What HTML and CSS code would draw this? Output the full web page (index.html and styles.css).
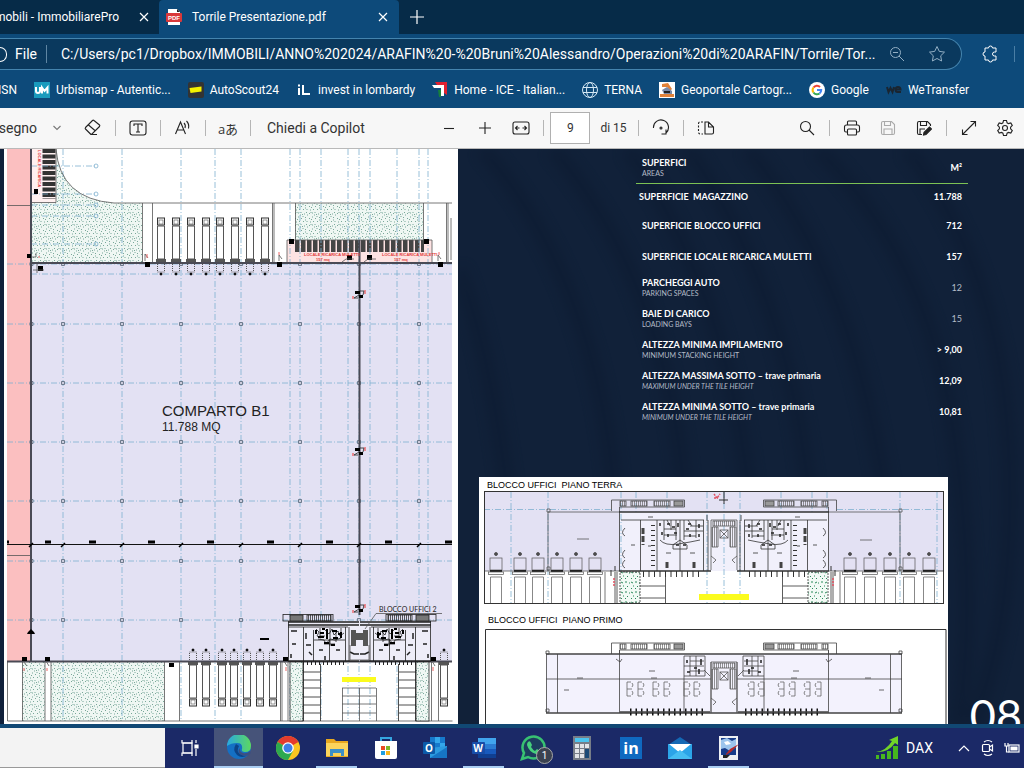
FILE: index.html
```html
<!DOCTYPE html>
<html lang="it">
<head>
  <meta charset="UTF-8">
  <meta name="viewport" content="width=device-width, initial-scale=1.0">
  <title>Torrile Presentazione.pdf</title>
  <link rel="stylesheet" href="styles.css">
</head>
<body>

  <!-- Tabs -->
  <div class="tabs">
    <div class="tab tab-cut">
      <span>Immobili - ImmobiliarePro</span>
      <button class="close" aria-label="Chiudi"><svg width="10" height="10" viewBox="0 0 10 10"><path d="M1 1l8 8M9 1l-8 8"/></svg></button>
    </div>
    <div class="tab active">
      <svg width="16" height="16" viewBox="0 0 16 16"><path d="M2 0h9l3 3v13H2z" fill="#fff"/><path d="M11 0v3h3z" fill="#222"/><rect y="4" width="16" height="9" rx="1" fill="#d9383a"/><text x="8" y="11" class="pdf-mark">PDF</text></svg>
      <span>Torrile Presentazione.pdf</span>
      <button class="close" aria-label="Chiudi"><svg width="10" height="10" viewBox="0 0 10 10"><path d="M1 1l8 8M9 1l-8 8"/></svg></button>
    </div>
    <button class="new-tab" aria-label="Nuova scheda"><svg width="14" height="14" viewBox="0 0 14 14"><path d="M7 0v14M0 7h14"/></svg></button>
  </div>

  <!-- Address bar -->
  <div class="address">
    <div class="omnibox">
      <span class="info"></span>
      <label for="url">File</label>
      <input id="url" type="text" value="C:/Users/pc1/Dropbox/IMMOBILI/ANNO%202024/ARAFIN%20-%20Bruni%20Alessandro/Operazioni%20di%20ARAFIN/Torrile/Tor...">
      <button aria-label="Zoom"><svg width="16" height="16" viewBox="0 0 16 16"><circle cx="6.500" cy="6.500" r="5"/><path d="M10 10l5 5M4 6.500h5"/></svg></button>
      <button aria-label="Preferiti"><svg width="18" height="18" viewBox="0 0 18 18"><path d="M9 1.500l2.300 4.900 5.200.7-3.800 3.700.9 5.200L9 13.500 4.400 16l.9-5.200L1.500 7.100l5.200-.7z"/></svg></button>
    </div>
    <button class="ext" aria-label="Estensioni"><svg width="18" height="18" viewBox="0 0 18 18"><path d="M4 3h3.500a2 2 0 0 1 4 0H15v4h-1.500a2 2 0 0 0 0 4H15v4h-3.500a2 2 0 0 1-4 0H4v-4a2 2 0 0 1 0-4z"/></svg></button>
    <span class="edge-line"></span>
  </div>

  <!-- Favourites -->
  <nav class="favourites">
    <a href="#" class="fav-cut">MSN</a>
    <a href="#"><svg width="16" height="16" viewBox="0 0 16 16"><rect width="16" height="16" fill="#1a9bbd"/><path d="M2 5v4q0 2 2 2t2-2V5M8 11.500V5.500l2.500 3.500L13.500 5.500v6" fill="none" stroke="#fff" stroke-width="2"/></svg>Urbismap - Autentic...</a>
    <a href="#"><svg width="16" height="16" viewBox="0 0 16 16"><rect width="16" height="16" rx="2" fill="#333"/><path d="M1.500 6l12-1.500v5L2.500 11z" fill="#f5f200"/></svg>AutoScout24</a>
    <a href="#"><svg width="16" height="16" viewBox="0 0 16 16"><path d="M3 6v7M3 2.500v2M7 3v9h7" fill="none" stroke="#fff" stroke-width="2"/></svg>invest in lombardy</a>
    <a href="#"><svg width="16" height="16" viewBox="0 0 16 16"><path d="M3 0h12v13l-3-2V3H5z" fill="#e02030"/><path d="M0 3h12v11H9V6H2z" fill="#fff"/><path d="M6 8h3v7H7z" fill="#16803c"/></svg>Home - ICE - Italian...</a>
    <a href="#"><svg width="16" height="16" viewBox="0 0 16 16" fill="none" stroke="#d4e8f5"><circle cx="8" cy="8" r="7.500"/><ellipse cx="8" cy="8" rx="3.500" ry="7.500"/><path d="M1 5.500h14M1 10.500h14"/></svg>TERNA</a>
    <a href="#"><svg width="16" height="16" viewBox="0 0 16 16"><rect width="16" height="16" fill="#fff"/><path d="M3 2l6-1 4 6-2 2-3-4H3z" fill="#e0823a"/><path d="M3 8l5-3 5 4v3H5z" fill="#7a8aa8"/><path d="M1 12h14v3H1z" fill="#e0823a"/><path d="M5 10h6" stroke="#222" stroke-width="2"/></svg>Geoportale Cartogr...</a>
    <a href="#"><svg width="16" height="16" viewBox="0 0 16 16" fill="none" stroke-width="2"><circle cx="8" cy="8" r="8" fill="#fff"/><path d="M4.500 5.500A4.200 4.200 0 0 1 11 5" stroke="#ea4335"/><path d="M4.500 5.500a4.200 4.200 0 0 0 0 5" stroke="#fbbc05"/><path d="M4.500 10.500A4.200 4.200 0 0 0 10.500 11.500" stroke="#34a853"/><path d="M10.500 11.500A4.200 4.200 0 0 0 12.200 8H8" stroke="#4285f4"/></svg>Google</a>
    <a href="#"><svg width="16" height="16" viewBox="0 0 16 16"><path d="M1 5l1.500 5L4.500 6l2 4L8 5M15 10h-3.500q-2 0-2-2.500T12 5t2.500 2.500H10" fill="none" stroke="#1a2530" stroke-width="2"/></svg>WeTransfer</a>
  </nav>

  <!-- PDF toolbar -->
  <div class="pdf-bar">
    <div class="group">
      <span class="draw">Disegno</span>
      <button class="arrow" aria-label="Opzioni disegno"><svg width="8" height="6" viewBox="0 0 8 6"><path d="M.5 1L4 4.500 7.500 1"/></svg></button>
      <button aria-label="Cancella"><svg width="18" height="18" viewBox="0 0 18 18"><path d="M7 15.500L1.500 10q-.7-.7 0-1.500l7-7q.7-.7 1.500 0L15.500 6q.7.7 0 1.500l-8 8zM4.500 6l7 6M7 15.500h6"/></svg></button>
      <i class="sep"></i>
      <button aria-label="Testo"><svg width="18" height="16" viewBox="0 0 18 16"><rect x="1" y="1" width="16" height="14" rx="2.500"/><path d="M5 6V4h8v2M9 4v8M7 12h4"/></svg></button>
      <i class="sep"></i>
      <button aria-label="Leggi"><svg width="18" height="18" viewBox="0 0 18 18"><path d="M1.500 15L6.500 3l5 12M3 11h7M10 4q2 2 1 5M12.500 2q3 3 2 7.500"/></svg></button>
      <i class="sep"></i>
      <button class="translate" aria-label="Traduci">aあ</button>
      <i class="sep"></i>
      <button class="copilot">Chiedi a Copilot</button>
    </div>
    <div class="group">
      <button aria-label="Riduci"><svg width="12" height="12" viewBox="0 0 12 12"><path d="M1 6.500h10"/></svg></button>
      <button aria-label="Ingrandisci"><svg width="12" height="12" viewBox="0 0 12 12"><path d="M0 6h12M6 0v12"/></svg></button>
      <button aria-label="Adatta"><svg width="18" height="14" viewBox="0 0 18 14"><rect x="1" y="1" width="16" height="12" rx="2"/><path d="M3.500 7h4M5.500 5l-2 2 2 2M14.500 7h-4M12.500 5l2 2-2 2"/></svg></button>
      <i class="sep"></i>
      <input id="page" class="page" type="text" value="9">
      <label for="page" class="of">di 15</label>
      <i class="sep"></i>
      <button aria-label="Ruota"><svg width="18" height="18" viewBox="0 0 18 18"><path d="M1.500 9A7.500 7.500 0 1 1 14 14M14 10.500v4.500h-4.500"/><circle cx="9" cy="9" r="1"/></svg></button>
      <i class="sep"></i>
      <button aria-label="Visualizzazione"><svg width="18" height="16" viewBox="0 0 18 16"><path d="M8 2v12h7q1.500 0 1.500-1.500V7L11.500 2zM11.500 2v5h5"/><path d="M6 2H3Q1.500 2 1.500 4v8q0 2 1.500 2h3" stroke-dasharray="2 1.500"/></svg></button>
    </div>
    <div class="group">
      <button aria-label="Cerca"><svg width="16" height="16" viewBox="0 0 16 16"><circle cx="6.500" cy="6.500" r="5"/><path d="M10 10l5 5"/></svg></button>
      <i class="sep"></i>
      <button aria-label="Stampa"><svg width="18" height="16" viewBox="0 0 18 16"><path d="M4.500 5V2q0-1 1-1h7q1 0 1 1v3M4.500 12H3q-1.500 0-1.500-1.500V7q0-2 2-2h11q2 0 2 2v3.500q0 1.500-1.500 1.500h-1.500"/><rect x="4.500" y="9" width="9" height="6" rx="1"/></svg></button>
      <button class="off" aria-label="Salva"><svg width="16" height="16" viewBox="0 0 16 16"><path d="M3 1.500h8.500l3 3V13q0 1.500-1.500 1.500H3q-1.500 0-1.500-1.500V3q0-1.500 1.500-1.500zM4.500 2v3.500h6V2M4 14V9h8v5"/></svg></button>
      <button aria-label="Salva con nome"><svg width="16" height="16" viewBox="0 0 16 16"><path d="M6 14.500H3q-1.500 0-1.500-1.500V3q0-1.500 1.500-1.500h8.500l3 3V6M4.500 2v3.500h6V2M4 14V9h5"/><path d="M8 12.500l5.500-5.500 2 2-5.500 5.500-2.500.5z" fill="#222"/></svg></button>
      <i class="sep"></i>
      <button aria-label="Schermo intero"><svg width="16" height="16" viewBox="0 0 16 16"><path d="M1.500 14.500l13-13M9.500 1.500h5v5M1.500 9.500v5h5"/></svg></button>
      <button aria-label="Impostazioni"><svg width="18" height="18" viewBox="0 0 18 18"><circle cx="9" cy="9" r="2.500"/><path d="M7.500 1.500h3l.6 2.300 1.300.8 2.400-.7 1.500 2.600L14.600 8.200v1.600l1.700 1.700-1.500 2.600-2.400-.7-1.300.8-.6 2.300h-3l-.6-2.300-1.300-.8-2.400.7-1.500-2.600 1.700-1.700V8.200L1.700 6.500l1.500-2.600 2.400.7 1.300-.8z"/></svg></button>
    </div>
  </div>

  <!-- Document -->
  <main class="doc">
    <section class="sheet">
      <svg class="plan" viewBox="4 149 454 575">
        <defs>
          <pattern id="grass" width="14" height="12" patternUnits="userSpaceOnUse">
            <rect width="14" height="12" fill="#eff7f3"/>
            <path d="M1 2l1 1M4 1h1M7 3l1-1M11 1l1 1M2 6h1M5 5l1 1M9 6l1-1M13 5v1M1 10l1-1M4 9h1M7 8v1M10 10h1M12 8l1 1M6 11h1M3 4l1-1M9 0v1M11 4h1M3 8v1M8 10l1 1M13 11h1" stroke="#5a9481" stroke-width=".8"/>
          </pattern>
          <pattern id="bars" width="6" height="12" x="295" y="240" patternUnits="userSpaceOnUse"><rect x="0" y="0" width="4.500" height="12" fill="#444"/></pattern>
          <pattern id="steps" width="2" height="8" patternUnits="userSpaceOnUse"><path d="M.5 0v8" stroke="#333" stroke-width=".8"/></pattern>
          <g id="truck" fill="none" stroke="#555">
            <rect x="-3.500" y="218" width="7" height="7" stroke="#333"/><rect x="-2" y="220" width="4" height="4" stroke-width=".6"/>
            <path d="M-3.500 226v33h7v-33z"/><path d="M-5 260.500H5" stroke-width="3"/>
            <path d="M-3.500 264v8h7v-8" stroke-dasharray="1 1"/><circle cy="274" r="1" fill="#000" stroke="#000"/>
          </g>
          <g id="pillars" fill="#ccd" stroke="#567" stroke-width=".8">
            <path d="M30-1.500h3v3h-3zM61.500-1.500h3v3h-3zM120.500-1.500h3v3h-3zM179.500-1.500h3v3h-3zM239.500-1.500h3v3h-3zM298.500-1.500h3v3h-3zM357.500-1.500h3v3h-3zM417.500-1.500h3v3h-3z"/>
          </g>
          <g id="door"><path d="M-4-3h5v3h-5zM0 1h4v3H0z"/><path d="M1-3h4l-1 4M0 1l-5 3h4" fill="none" stroke="#222" stroke-width=".8"/><path d="M6-4v4M-6 2v3" stroke="#e33"/></g>
          <g id="offices" fill="none" stroke="#222" stroke-width=".8">
            <rect x="283" y="614.500" width="50" height="6.500"/><rect x="290" y="615" width="13" height="6" fill="#777"/><rect x="307" y="615" width="24" height="6" fill="url(#steps)"/>
            <path d="M288 622h71M288 625h71M288 661h71" stroke-width="1.500"/>
            <path d="M288.500 621v40M303.500 627v34M313.500 630v31M329.500 640v21M345.500 627v34M349 627v34M288 627h60M314 640h31"/>
            <path d="M316 629l3 3-2 4 4 2M320 628v8h5M325 630l4 4 3-5 2 6 4-4 2 5 4-3M318 639l6 1 2 4 4-5 5 1 6-2M330 628v18M324 644h11M336 630v12M341 628v10"/>
            <path d="M316 630v4M320 633h4M327 629v10M332 631h5M341 632v6M318 637h6M333 638h5M324 643h5M331 645h4M338 634h4M322 629h3" stroke="#000" stroke-width="2"/>
            <path d="M291 631h6M292 644h4M306 645h5M306 633v6M309 652l3 3M319 650h4M336 650h4M291 654v4M325 656v4M350 652l4 2h5" stroke-width="1.500"/>
            <path d="M295 663h52" stroke-width="4" stroke-dasharray="1 3"/>
            <path d="M303.500 662v59M320.500 664v57M303 672h17M303 680h17M303 688h17M303 697h17M303 705h17M303 713h17"/>
            <rect x="290" y="662" width="13" height="59" fill="url(#grass)"/>
          </g>
        </defs>

        <rect x="7" y="149" width="24" height="512" fill="#fbbfc0"/>
        <rect x="31" y="263" width="421" height="398" fill="#e3e1f3"/>
        <path d="M56 149q4 50 58 54h28v59H32v-59h24z" fill="url(#grass)"/>
        <path d="M295 203h128v37H295zM22 662h23v59H22zM51 662h113v59H51z" fill="url(#grass)"/>
        <path d="M287 240h145v22H287z" fill="#fde3e3"/>
        <path d="M32 149h24v54H32z" fill="#fff0f0"/>
        <rect x="295" y="240" width="129" height="12" fill="url(#bars)"/>
        <path d="M49 149v50" stroke="#333" stroke-width="13" stroke-dasharray="4 1.500"/>

        <!-- Grid axes -->
        <path class="axis" d="M63 149v572M122 149v572M181 149v572M215 149v572M241 149v572M290 149v572M300 149v572M321 149v572M348 149v572M359 149v572M370 149v572M397 149v572M419 149v572M428 149v572"/>
        <path class="axis" d="M7 264h445M31 274h421M7 324h445M7 383h445M7 442h445M7 501h445M7 561h445M7 620h445M31 166h66M31 194h66M31 205h66M31 216h66M31 244h66"/>
        <g class="ring"><circle cx="96" cy="166" r="2"/><circle cx="96" cy="194" r="2"/><circle cx="96" cy="205" r="2"/><circle cx="96" cy="216" r="2"/><circle cx="96" cy="244" r="2"/></g>
        <use href="#pillars" y="264"/><use href="#pillars" y="324"/><use href="#pillars" y="383"/><use href="#pillars" y="442"/><use href="#pillars" y="501"/><use href="#pillars" y="561"/><use href="#pillars" y="620"/>

        <!-- Walls and outlines -->
        <path class="thin" d="M56 149q4 50 58 54h338M142.500 203v59M152.500 203v59M272.500 203v59M274 203v59M295.500 203v37M423.500 203v37M446.500 203v59M448 203v59M7 205.500h24M32 202.500h24V149M7 555.500h24M287 262v-22h145v22M451 218v42"/>
        <path class="thin" d="M7.500 661v60h445M22.500 661v60M45 661v60M51 661v60M164.500 661v60M179.500 661v60M280.500 661v60M282 661v60M288 661v60M431.500 661v60M438.500 661v60"/>
        <path class="wall" d="M31 149v512M31 263h421M7 661.500h445M359.500 240v375"/>
        <path d="M7 544.500h445" stroke="#111"/>
        <path d="M29 547l4-4M61 547l4-4M120 547l4-4M179 547l4-4M239 547l4-4M298 547l4-4M357 547l4-4M417 547l4-4" stroke="#000" stroke-width="1.500"/>
        <path d="M7 540.500h2v3H7zM45 540.500h6v3h-6zM89 540.500h7v3h-7zM148 540.500h7v3h-7zM207 540.500h7v3h-7zM267 540.500h7v3h-7zM326 540.500h7v3h-7zM385 540.500h7v3h-7zM445 540.500h7v3h-7zM260 638h9v2h-9z"/>

        <use href="#truck" x="161"/><use href="#truck" x="176"/><use href="#truck" x="191"/><use href="#truck" x="206"/><use href="#truck" x="220"/><use href="#truck" x="235"/><use href="#truck" x="250"/><use href="#truck" x="265"/>
        <g transform="translate(0 924) scale(1 -1)">
          <use href="#truck" x="193"/><use href="#truck" x="206"/><use href="#truck" x="222"/><use href="#truck" x="234"/><use href="#truck" x="247"/><use href="#truck" x="260"/><use href="#truck" x="273"/><use href="#truck" x="444"/>
        </g>

        <use href="#door" x="359" y="294"/><use href="#door" x="359" y="451"/><use href="#door" x="359" y="608"/>
        <path d="M27 254h4v4h-4zM38 266h5v5h-5zM34 189h4v5h-4zM145 262h5v5h-5zM277 262h5v5h-5zM438 262h5v5h-5zM289 239h5v5h-5zM424 239h5v5h-5zM347 255h5v5h-5zM367 255h5v5h-5zM22 657h5v4h-5zM45 657h5v4h-5zM169 663h5v4h-5zM283 657h5v4h-5zM431 657h5v4h-5zM28 632l3-3 3 3 1 2h-8z"/>
        <path d="M32 257h4v-4M33 270h11M37 264v9M145 261v-7l3 4M279 261v-6l3 4M438 261v-6l3 4M342 262l4-3h8M364 262l4-3h8M23 661l4 5M46 661l3 5M284 661l3 5M432 661l3 5" class="thin"/>
        <path d="M147 254v4M279 252v3M439 252v3M24 668v3M47 668v3M286 667v4M433 667v4M38 257h2" stroke="#e66"/>

        <!-- Office block -->
        <rect x="288" y="621" width="143" height="40" fill="#eeedf8"/>
        <use href="#offices"/>
        <use href="#offices" transform="translate(719 0) scale(-1 1)"/>
        <path d="M351 630h5v3h7v-3h5v16h-5v-6h-7v6h-5z" fill="#555"/><path class="thin" d="M350 645v15h19v-15M342.500 688v33M359.500 688v33M376.500 688v33M342 688h34M342 696h34M342 704h34M342 713h34"/>
        <path d="M342 677h34v5h-34z" fill="#fbfb1e"/>
        <path class="thin" d="M365 629l11-15.500h66"/>

        <text x="162" y="416" font-size="15">COMPARTO B1</text>
        <text x="162" y="431" font-size="12">11.788 MQ</text>
        <text x="379" y="612" class="office-name">BLOCCO UFFICI 2</text>
        <g class="red-text">
          <text x="304" y="256">LOCALE RICARICA MULETTI</text><text x="316" y="261">157 mq</text>
          <text x="382" y="256">LOCALE RICARICA MULETTI</text><text x="394" y="261">157 mq</text>
          <text transform="translate(38 150) rotate(90)">LOCALE RICARICA</text>
        </g>
      </svg>
    </section>

    <section class="slide">
      <svg class="waves" viewBox="0 0 566 575" preserveAspectRatio="none" aria-hidden="true">
        <path d="M25 0q110 130 130 330T200 575"/><path d="M95 0q110 130 130 330T270 575"/><path d="M170 0q90 130 115 300T340 575"/><path d="M230 0q90 130 115 300T400 575"/><path d="M290 0q90 110 125 280T450 575"/><path d="M360 0q110 110 135 280T500 575"/><path d="M450 0q90 120 100 290T515 575"/><path d="M0 120q50 120 70 455"/>
      </svg>
      <table class="areas">
        <thead>
          <tr><th>SUPERFICI<small>AREAS</small></th><th>M²</th></tr>
        </thead>
        <tbody>
          <tr class="first"><th>SUPERFICIE&nbsp; MAGAZZINO</th><td>11.788</td></tr>
          <tr><th>SUPERFICIE BLOCCO UFFICI</th><td>712</td></tr>
          <tr><th>SUPERFICIE LOCALE RICARICA MULETTI</th><td>157</td></tr>
          <tr><th>PARCHEGGI AUTO<small>PARKING SPACES</small></th><td class="light">12</td></tr>
          <tr><th>BAIE DI CARICO<small>LOADING BAYS</small></th><td class="light">15</td></tr>
          <tr><th>ALTEZZA MINIMA IMPILAMENTO<small>MINIMUM STACKING HEIGHT</small></th><td>&gt; 9,00</td></tr>
          <tr><th>ALTEZZA MASSIMA SOTTO – trave primaria<small class="slant">MAXIMUM UNDER THE TILE HEIGHT</small></th><td>12,09</td></tr>
          <tr><th>ALTEZZA MINIMA SOTTO – trave primaria<small class="slant">MINIMUM UNDER THE TILE HEIGHT</small></th><td>10,81</td></tr>
        </tbody>
      </table>

      <svg class="floors" viewBox="479 477 469 247">
        <defs>
          <pattern id="treads" width="2" height="20" patternUnits="userSpaceOnUse"><path d="M.5 0v20" stroke="#666" stroke-width=".7"/></pattern>
          <pattern id="shrubs" width="10" height="10" patternUnits="userSpaceOnUse"><rect width="10" height="10" fill="#f2faf5"/><path d="M1 2l2 1M6 1v2M8 6l-1 1M3 6h1M1 9l1-1M5 9l1-1M9 3h1" stroke="#2b8a5c"/></pattern>
          <g id="bay" fill="none" stroke="#555" stroke-width=".7"><rect x="-6" y="558" width="12" height="12"/><path d="M-6 571H6" stroke="#222" stroke-width="2"/><rect x="-7.500" y="572" width="15" height="2.500"/><path d="M-5.500 603v-26h11v26"/><circle cy="554" r="1.500" fill="#555" stroke="#333"/></g>
          <g id="balcony" fill="none" stroke="#444" stroke-width=".8"><path d="M611.500 511v-11h73v7h-65v4"/><rect x="620" y="501" width="6" height="5" fill="url(#treads)"/><rect x="631" y="501" width="16" height="5" fill="url(#treads)"/><rect x="654" y="501" width="16" height="5" fill="url(#treads)"/><rect x="674" y="501" width="9" height="5" fill="#999"/></g>
          <g id="stairs" fill="none" stroke="#555" stroke-width=".8"><path d="M711 520v50M737 520v50M711 520h26"/><path d="M713 521h22v5h-22zM712 527h6v20h-6zM730 527h6v20h-6z" fill="url(#treads)"/><rect x="720" y="530" width="8" height="8"/><path d="M720 530l8 8M728 530l-8 8M711 556l5 4-3 3M737 556l-5 4 3 3"/></g>
          <g id="wing" fill="none" stroke="#333" stroke-width=".8">
            <path d="M619 512h105M619 571h92" stroke-width="1.500"/><path d="M619.500 511v60M621 520h83M640.500 520v51M657 520v51M680 540v31M703.500 520v51M708 520v51" />
            <path d="M664 520v20M671 520v10M676 520v20M684 520v20M690 526h13M664 529h12M684 531h19M696 520v18M660 540q5 6 18 4t22-4M664 535h13M684 536h12M680 520v20M667 520l3 6M688 520l4 6M673 545l7-5 7 5v4h-14z"/>
            <path d="M660 523v3M667 524h3M678 523v4M688 524h3M699 524v4M668 534v3M674 533h3M690 534v3M699 534v3M662 532v3M686 529h3M672 527h3M676 545h3M683 545h3" stroke="#222" stroke-width="1.500"/>
            <path d="M643 528v17M667 562v6M694 562v6" stroke="#444" stroke-width="3" stroke-dasharray="6 2"/>
            <path d="M653 525v42" stroke-width="4" stroke-dasharray="1 4"/><path d="M625 528q-5 5 0 8M625 550q-5 5 0 8M625 560q-5 5 0 8M631 545h4M648 546h3M666 553h5M690 553h5M648 517h5M707 515v6"/>
            <path d="M643 574h60" stroke-width="6" stroke-dasharray="1 4.500"/>
            <rect x="620" y="572" width="20" height="31" fill="url(#shrubs)" stroke-dasharray="2 1"/><path d="M665.500 572v31M640 586h25M640 598h25M617 572v31M615 572v31"/>
          </g>
          <g id="desk" fill="none" stroke="#666" stroke-width=".8"><path d="M2 682h-4v14h4M-2 689h5M3 683q2 2 0 4M3 691q2 2 0 4"/></g>
          <g id="upper" fill="none" stroke="#444" stroke-width=".8">
            <rect x="546" y="654" width="178" height="59" fill="#f3f2fd" stroke="none"/>
            <path d="M546 654h178M546 713h178" stroke-width="1.500"/><path d="M546.500 654v59M619.500 650v63M557.500 654v59M546 679h165M684 656v57M711 662v51M546 651h3v3h-3zM546 709h3v3h-3z"/>
            <path d="M684 656h21v20h-21M690 656v20M696 656v20M684 666h20M704 670l6 6M690 661h14M690 671h14"/><path d="M687 660v3M694 668h3M701 659v6M687 672h3M699 669v5" stroke="#222" stroke-width="1.500"/>
            <path d="M630 712h76" stroke="#111" stroke-width="7" stroke-dasharray="1.500 4"/><path d="M620 712h90" stroke-width="1.500"/><path d="M577 678h6M651 678h6M564 690h5M649 671h6M616 659l4 3 2-3"/>
            <use href="#desk" x="629"/><use href="#desk" x="640"/><use href="#desk" x="655"/><use href="#desk" x="666"/><use href="#desk" x="686"/><use href="#desk" x="696"/>
          </g>
        </defs>
        <rect x="479" y="477" width="469" height="247" fill="#fff"/>

        <!-- Ground floor -->
        <rect x="484" y="492" width="459" height="79" fill="#e3e1f3"/><rect x="619" y="512" width="210" height="59" fill="#f1f0fb"/>
        <path class="axis" d="M511 492v111M548 492v111M621 492v111M636 492v20M667 492v20M707 492v111M724 492v111M740 492v111M781 492v20M812 492v20M827 492v20M900 492v111M937 492v111M484 509.500h127M837 509.500h106"/>
        <path class="thin" d="M548 571v-59h71M829 512h71v59M484 571h135M829 571h114M547 509h3v3h-3zM899 509h3v3h-3zM547 567h3v3h-3zM899 567h3v3h-3zM577 539h12M860 540h12M605 572v31M840 572v31"/>
        <use href="#wing"/><use href="#wing" transform="translate(1448 0) scale(-1 1)"/>
        <use href="#balcony"/><use href="#balcony" transform="translate(1448 0) scale(-1 1)"/>
        <use href="#stairs"/>
        <use href="#bay" x="496"/><use href="#bay" x="520"/><use href="#bay" x="538"/><use href="#bay" x="557"/><use href="#bay" x="576"/><use href="#bay" x="595"/>
        <use href="#bay" x="850"/><use href="#bay" x="870"/><use href="#bay" x="890"/><use href="#bay" x="909"/><use href="#bay" x="929"/>
        <path d="M699 594h50v6h-50z" fill="#fbfb1e"/>
        <path d="M724 492v12M719 500h9M611 570v6M615 566v5M831 566v5M835 570v6" stroke="#333"/>
        <path d="M714 494l3 4 3-4M714 498h4M614 578v9M833 578v9" fill="none" stroke="#e05060" stroke-width="1.500" stroke-dasharray="2 1"/>
        <rect x="484.500" y="491.500" width="459" height="112" class="frame"/>

        <!-- First floor -->
        <use href="#upper"/><use href="#upper" transform="translate(1448 0) scale(-1 1)"/>
        <use href="#balcony" y="143"/><use href="#balcony" y="143" transform="translate(1448 0) scale(-1 1)"/>
        <use href="#stairs" y="142"/>
        <path d="M485.500 724v-94.500h460.500v94.500" class="frame"/>

        <text x="487" y="488">BLOCCO UFFICI&#160; PIANO TERRA</text>
        <text x="488" y="623">BLOCCO UFFICI&#160; PIANO PRIMO</text>
      </svg>
      <span class="number">08</span>
    </section>
  </main>

  <!-- Taskbar -->
  <footer class="taskbar">
    <input class="search" type="text" aria-label="Cerca">
    <div class="apps">
      <button aria-label="Visualizzazione attività"><svg width="18" height="18" viewBox="0 0 18 18" fill="none" stroke="#fff" stroke-width="1.200"><path d="M1 1v3h10V1M1 17v-3h10v3M15 1v3M15 10v7"/><rect x="2" y="4" width="9" height="10"/><path d="M14 6h3v3h-3z" fill="#fff"/></svg></button>
      <button class="current" aria-label="Edge"><svg width="24" height="24" viewBox="0 0 24 24"><defs><linearGradient id="edge" x1="0" y1="0" x2="1" y2="0"><stop offset="0" stop-color="#2aa8e0"/><stop offset="1" stop-color="#5cd860"/></linearGradient></defs><circle cx="12" cy="12" r="12" fill="#1470c4"/><path d="M0 11A12 12 0 0 1 24 11q0 6-6 6-4 0-3-3 1-6-5-6-6 0-10 3z" fill="url(#edge)"/><path d="M9 9q-4 6 1 11 5 4 11 0-4 2-8-1t-1-8z" fill="#0c4488"/><path d="M13 13q-1 4 3 5 4 1 7-2l1 2-2 2q-6 2-9-1t0-6z" fill="#3c4f82"/></svg></button>
      <button aria-label="Chrome"><svg width="24" height="24" viewBox="0 0 24 24"><circle cx="12" cy="12" r="12" fill="#f8c520"/><path d="M12 12L1.600 6A12 12 0 0 1 22.400 6z" fill="#e33b2e"/><path d="M12 12L1.600 6A12 12 0 0 0 12 24l5-9z" fill="#2da94f"/><circle cx="12" cy="12" r="5.800" fill="#fff"/><circle cx="12" cy="12" r="4.500" fill="#3d7fe8"/></svg></button>
      <button class="open" aria-label="Esplora file"><svg width="22" height="20" viewBox="0 0 22 20"><path d="M0 1h8l2 2h12v16H0z" fill="#e8a820"/><path d="M0 5h22v13H0z" fill="#fbd45c"/><path d="M4 18v-7h14v7h-3v-3H7v3z" fill="#3b8fc8"/></svg></button>
      <button aria-label="Store"><svg width="24" height="24" viewBox="0 0 24 24"><path d="M7 6V2h10v4" fill="none" stroke="#35a5e0" stroke-width="2"/><path d="M1 5h22v16q0 2-2 2H3q-2 0-2-2z" fill="#fff"/><path d="M7 10h4v4H7z" fill="#e84a26"/><path d="M12 10h4v4h-4z" fill="#7cb72a"/><path d="M7 15h4v4H7z" fill="#209fe0"/><path d="M12 15h4v4h-4z" fill="#f8b61c"/></svg></button>
      <button aria-label="Outlook"><svg width="24" height="22" viewBox="0 0 24 22"><path d="M7 0h15v12H7z" fill="#1679cc"/><path d="M12 0h5v6h-5zM17 6h5v6h-5z" fill="#34a7ea"/><path d="M7 11l17-2v12H7z" fill="#2c9be0"/><path d="M7 21l17-11v11z" fill="#1675c5"/><rect y="5" width="12" height="12" rx="1" fill="#0c5aa8"/><text x="6" y="15" class="app-letter">O</text></svg></button>
      <button class="open" aria-label="Word"><svg width="24" height="20" viewBox="0 0 24 20"><path d="M6 0h18v6H6z" fill="#41a5ee"/><path d="M6 6h18v5H6z" fill="#2b7cd3"/><path d="M6 11h18v5H6z" fill="#185abd"/><path d="M6 16h18v4H6z" fill="#103f91"/><rect y="4" width="13" height="12" rx="1" fill="#174da8"/><text x="6" y="14" class="app-letter">W</text></svg></button>
      <button aria-label="WhatsApp"><svg width="26" height="26" viewBox="0 0 26 26"><path d="M2 24l2-6A11 11 0 1 1 8 22z" fill="#1d3d5e" stroke="#38c172" stroke-width="2.500"/><path d="M8 7q2-2 3 1l1 2-1 2q2 3 4 4l2-2 3 2q0 3-4 3Q9 17 7 10q0-2 1-3z" fill="#46d07c"/></svg><span class="badge">1</span></button>
      <button aria-label="Calcolatrice"><svg width="18" height="24" viewBox="0 0 18 24"><rect width="18" height="24" fill="#777d88"/><path d="M2 2h14v4H2z" fill="#4cc4ee"/><path d="M2 8h4v4H2zM7 8h4v4H7zM12 8h4v4h-4zM2 13h4v4H2zM7 13h4v4H7zM2 18h4v4H2zM7 18h4v4H7z" fill="#e2e4e8"/><path d="M12 13h4v9h-4z" fill="#1b4976"/></svg></button>
      <button aria-label="LinkedIn"><svg width="22" height="22" viewBox="0 0 22 22"><rect width="22" height="22" fill="#0f69c0"/><text x="11" y="17" class="linked">in</text></svg></button>
      <button aria-label="Posta"><svg width="24" height="22" viewBox="0 0 24 22"><path d="M0 8l12-8 12 8z" fill="#1468b4"/><path d="M0 7h24v15H0z" fill="#2ba4e8"/><path d="M1 7h22l-11 9z" fill="#fff"/><path d="M0 22l12-9 12 9z" fill="#45bdf2"/></svg></button>
      <button class="open" aria-label="Foto"><svg width="20" height="24" viewBox="0 0 20 24"><rect width="19" height="24" fill="#eef0f4"/><rect x="2" y="2" width="15" height="17" fill="#173c8a"/><path d="M2 4l6-2 5 3 4-2v8l-6 4-5-3-4 1z" fill="#9cc4ec"/><path d="M5 6l4-1 3 3-5 1z" fill="#fff"/><path d="M7 18l4-5 9-5-8 8-5 3z" fill="#b52a2a"/><path d="M4 19h7l-3 3H4z" fill="#222"/></svg></button>
    </div>
    <div class="tray">
      <button class="stock"><svg width="24" height="24" viewBox="0 0 24 24"><path d="M1 21v-2h3v4H1zM6 18h4v5H6zM12 15h4v8h-4zM18 10h5v13h-5z" fill="#46b81e"/><path d="M1 16q10-1 16-11l-3-1 9-4v9l-3-2Q13 17 1 16z" fill="#70d428"/></svg>DAX</button>
      <button aria-label="Icone nascoste"><svg width="12" height="8" viewBox="0 0 12 8"><path d="M1 7l5-5 5 5"/></svg></button>
      <button aria-label="Riunione"><svg width="14" height="18" viewBox="0 0 14 18"><rect x="1.500" y="5.500" width="7" height="7" rx="1"/><path d="M8.500 8l3-2v6l-3-2M3 3q4-3 8 0M3 15q4 3 8 0"/></svg></button>
      <button aria-label="Batteria"><svg width="16" height="12" viewBox="0 0 16 12"><rect x="5" y="3" width="10" height="7"/><path d="M7 5h6v3H7z" fill="#fff"/><path d="M1 1v3h3V1M2.500 4v6H5"/></svg></button>
    </div>
  </footer>

</body>
</html>
```
FILE: styles.css
```css
/* ====== RESET ====== */
* {
  box-sizing: border-box;
}

html, body {
  margin: 0;
  padding: 0;
}

body {
  display: flex;
  flex-direction: column;
  height: 100vh;
  overflow: hidden;
  background: #0d4a7a;
  color: #fff;
  font-family: "Segoe UI", Roboto, sans-serif;
  font-size: 12px;
}

button {
  display: flex;
  align-items: center;
  justify-content: center;
  margin: 0;
  padding: 0;
  border: 0;
  background: none;
  color: inherit;
  font: inherit;
}

input {
  border: 0;
  font: inherit;
  color: inherit;
}

svg {
  flex: none;
}

/* ====== TABS ====== */
.tabs {
  display: flex;
  flex: none;
  height: 34px;
  background: #062b48;
}

.tab {
  display: flex;
  align-items: center;
  width: 240px;
  padding: 0 11px 0 7px;
  white-space: nowrap;
}

.tab span {
  margin-left: 10px;
}

.tab-cut {
  width: 159px;
  padding: 0 10px 0 0;
  justify-content: flex-end;
  overflow: hidden;
}

.tab-cut .close {
  margin-left: 20px;
}

.tab.active {
  background: #0d4a7a;
  border-radius: 4px 4px 0 0;
}

.active .close {
  margin-left: auto;
}

.close svg, .new-tab svg {
  stroke: #fff;
  stroke-width: 1.2;
}

.new-tab {
  width: 36px;
}

.pdf-mark {
  fill: #fff;
  font: bold 6px "Liberation Sans", sans-serif;
  text-anchor: middle;
}

/* ====== ADDRESS ====== */
.address {
  display: flex;
  flex: none;
  align-items: center;
  height: 40px;
}

.omnibox {
  display: flex;
  flex: 1;
  align-items: center;
  height: 32px;
  border: 1px solid #4484ae;
  border-left: 0;
  border-radius: 0 16px 16px 0;
  background: #0a395e;
  font-size: 14px;
}

.info {
  width: 7px;
  height: 15px;
  border: 1px solid #fff;
  border-left: 0;
  border-radius: 0 8px 8px 0;
}

.omnibox label {
  width: 31px;
  margin-left: 8px;
}

.omnibox input {
  flex: 1;
  min-width: 0;
  height: 18px;
  padding: 0 0 0 14px;
  border-left: 1px solid #5f86a3;
  background: none;
}

.omnibox button {
  width: 40px;
}

.omnibox button svg {
  fill: none;
  stroke: #93afc4;
}

.omnibox button:last-child {
  margin-right: 4px;
}

.ext {
  width: 56px;
}

.ext svg {
  fill: none;
  stroke: #fff;
}

.edge-line {
  width: 6px;
  height: 16px;
  border-right: 1px solid #4a7ea5;
  margin: 0 9px 0 -9px;
}

/* ====== FAVOURITES ====== */
.favourites {
  display: flex;
  flex: none;
  gap: 17px;
  height: 34px;
  padding-bottom: 2px;
  white-space: nowrap;
  overflow: hidden;
}

.favourites a {
  display: flex;
  align-items: center;
  gap: 6px;
  color: #fff;
  text-decoration: none;
}

.favourites .fav-cut {
  width: 17px;
  justify-content: flex-end;
  overflow: hidden;
}

/* ====== PDF TOOLBAR ====== */
.pdf-bar {
  display: flex;
  flex: none;
  justify-content: space-between;
  height: 41px;
  padding-right: 1px;
  border-bottom: 1px solid #b9b9b9;
  background: #f7f7f7;
  color: #333;
  font-size: 14px;
}

.group {
  display: flex;
  align-items: center;
}

.group button {
  width: 36px;
  height: 32px;
}

.group svg {
  fill: none;
  stroke: #222;
  stroke-width: 1.1;
}

.group .off svg {
  stroke: #aaa;
}

.group .arrow svg {
  stroke: #777;
}

.group .copilot {
  width: auto;
  padding: 0 2px 0 12px;
}

.group .translate {
  font-family: "Open Sans", "Noto Sans CJK JP", sans-serif;
  font-size: 13px;
}

.draw {
  display: flex;
  justify-content: flex-end;
  width: 39px;
  padding-right: 2px;
  overflow: hidden;
}

.sep {
  width: 1px;
  height: 16px;
  margin: 0 4px;
  background: #b5b5b5;
}

.page {
  width: 40px;
  height: 32px;
  margin-left: 2px;
  border: 1px solid #b0b0b0;
  background: #fff;
  font-size: 12px;
  text-align: center;
}

.of {
  width: 44px;
  padding-left: 10px;
  font-size: 12px;
}

/* ====== DOCUMENT ====== */
.doc {
  display: grid;
  grid-template-columns: 458fr 566fr;
  flex: 1;
  min-height: 0;
  overflow: hidden;
  background: #10203a;
}

.sheet {
  padding-left: 4px;
}

.plan {
  display: block;
  width: 100%;
  background: #fff;
  font-family: "Liberation Sans", Arial, sans-serif;
}

.plan text {
  fill: #222;
}

.axis {
  fill: none;
  stroke: #7fb0cf;
  stroke-width: 0.8;
  stroke-dasharray: 6 2 1 2;
}

.thin, .ring {
  fill: none;
  stroke: #555;
  stroke-width: 0.8;
}

.ring {
  stroke: #7fb0cf;
}

.wall {
  fill: none;
  stroke: #4a4a55;
  stroke-width: 2;
}

.plan .office-name {
  font: 7px Lato, sans-serif;
}

.plan .red-text text {
  fill: #e23a3a;
  font-size: 4px;
  font-weight: bold;
}

.slide {
  position: relative;
  min-height: 0;
  padding: 5px 0 0;
  background: #112139;
  overflow: hidden;
  font-family: "Century Gothic", Lato, sans-serif;
}

.waves {
  position: absolute;
  inset: 0;
  width: 100%;
  height: 100%;
  fill: none;
  stroke: #0b182d;
  stroke-width: 16;
  opacity: 0.4;
  filter: blur(6px);
}

.areas {
  position: relative;
  width: calc(100% - 234px);
  margin: 0 56px 0 178px;
  border-collapse: collapse;
  font-size: 9px;
  line-height: 10px;
}

.areas tr {
  height: 31px;
}

.areas thead tr {
  height: 29px;
}

.areas .first {
  height: 27px;
}

.areas thead th {
  border-bottom: 1px solid #7cc254;
}

.areas th, .areas td {
  padding: 0 6px;
  text-align: left;
  font-weight: bold;
}

.areas .first th {
  padding-left: 3px;
}

.areas th:last-child, .areas td {
  text-align: right;
}

.areas small {
  display: block;
  color: #b4bcc8;
  font-size: 7px;
  font-weight: normal;
}

.areas .slant {
  font-style: italic;
}

.areas .light {
  color: #b4bcc8;
  font-weight: normal;
}

.floors {
  position: relative;
  display: block;
  width: calc(100% - 97px);
  margin: 50px 76px 0 21px;
  font: 9px "Liberation Sans", Arial, sans-serif;
}

.frame {
  fill: none;
  stroke: #333;
}

.number {
  position: absolute;
  right: 2px;
  bottom: -18px;
  font-size: 45px;
  line-height: 54px;
}

/* ====== TASKBAR ====== */
.taskbar {
  display: flex;
  flex: none;
  height: 44px;
  border-top: 4px solid #114874;
  background: #1b2967;
}

.search {
  width: 165px;
  border-bottom: 1px solid #999;
  background: #f3f3f3;
}

.apps {
  display: flex;
  flex: 1;
}

.apps button {
  position: relative;
  width: 49px;
}

.apps .current {
  background: #465379;
  border-bottom: 2px solid #a9cdf2;
}

.apps .open::after {
  content: "";
  position: absolute;
  left: 4px;
  right: 4px;
  bottom: 0;
  height: 2px;
  background: #a9cdf2;
}

.badge {
  position: absolute;
  right: 4px;
  bottom: 4px;
  width: 17px;
  height: 17px;
  border: 1px solid #aaa;
  border-radius: 50%;
  background: #3b4250;
  font-size: 10px;
  line-height: 15px;
}

.app-letter {
  fill: #fff;
  font: bold 10px "Open Sans", sans-serif;
  text-anchor: middle;
}

.linked {
  fill: #fff;
  font: bold 16px "Open Sans", sans-serif;
  text-anchor: middle;
}

.tray {
  display: flex;
}

.tray button {
  width: 24px;
}

.tray .stock {
  width: auto;
  gap: 7px;
  margin-right: 19px;
  font-size: 14px;
}

.tray button:not(.stock) svg {
  fill: none;
  stroke: #fff;
  stroke-width: 1.2;
}
```
